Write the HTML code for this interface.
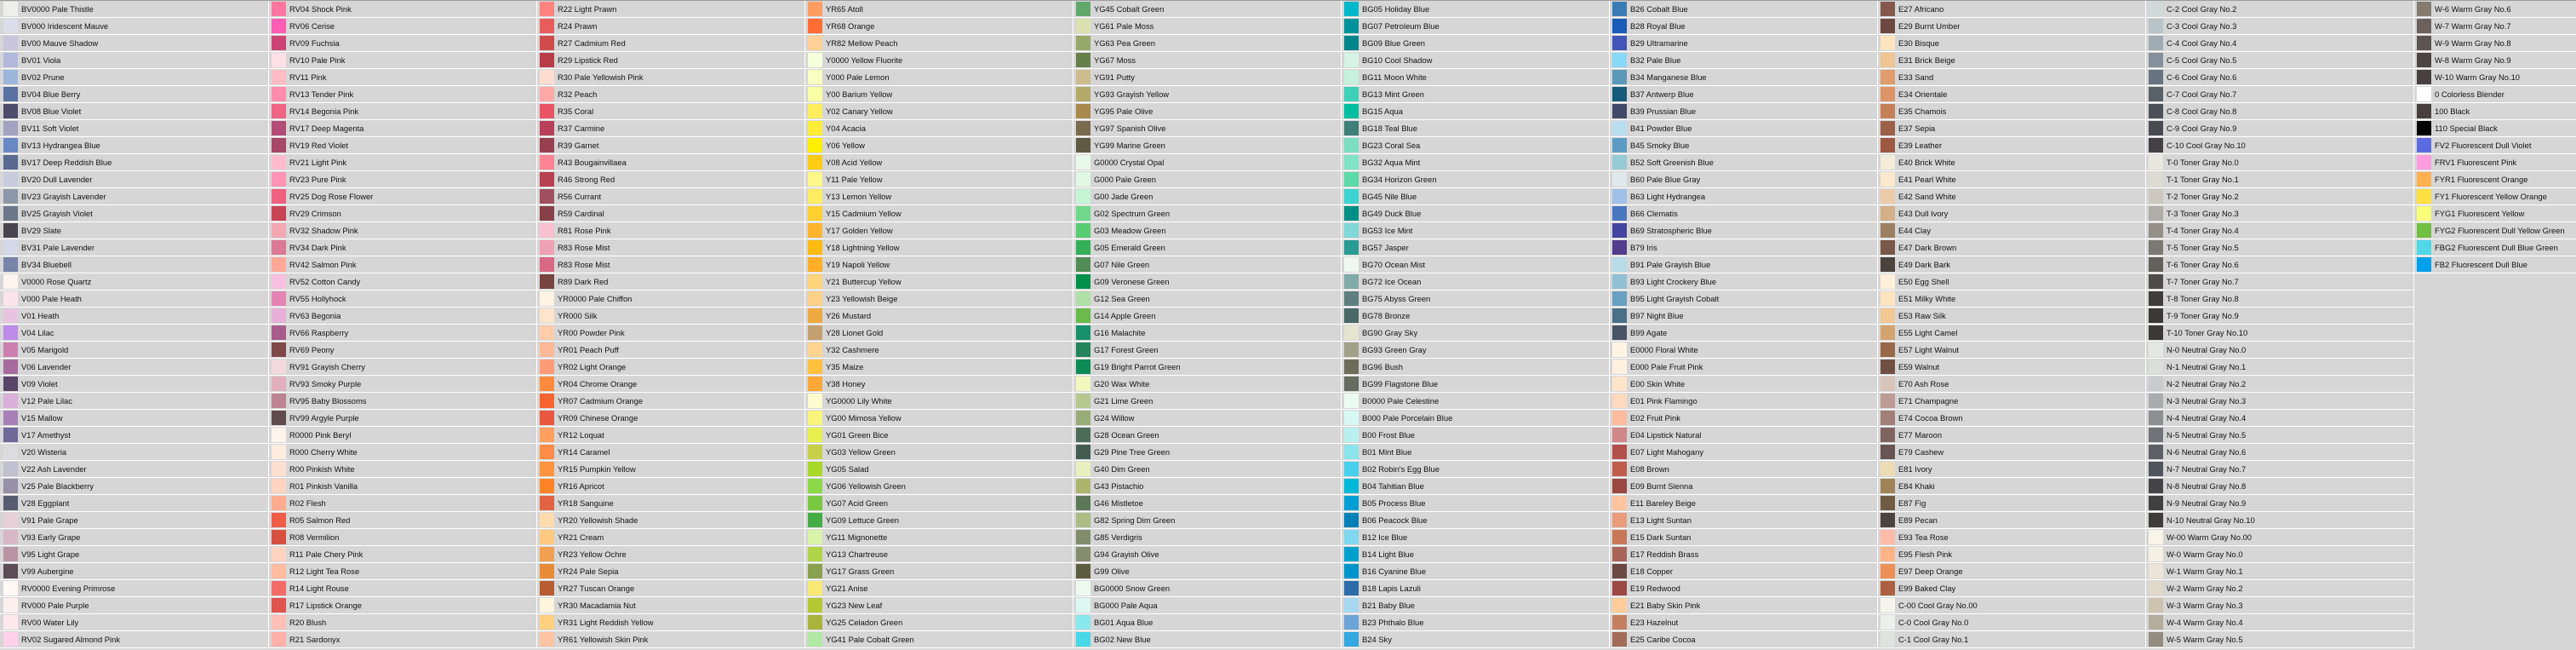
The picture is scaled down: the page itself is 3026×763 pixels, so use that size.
<!DOCTYPE html>
<html><head><meta charset="utf-8"><style>
body{margin:0;background:#d6d6d6;width:3026px;height:763px;overflow:hidden;position:relative;font-family:"Liberation Sans","DejaVu Sans",sans-serif;}
#top{position:absolute;left:0;top:0;width:3026px;height:1px;background:#9c9c9c}
.col{position:absolute;top:1px;width:316px}
.c{position:relative;height:20px;box-sizing:border-box;border-bottom:1px solid #fff;border-right:1px solid #fff;font-size:9.4px;line-height:19px;padding-left:25px;color:#111;white-space:nowrap;overflow:hidden}
.c i{position:absolute;left:4px;top:1px;width:17px;height:17px}
</style></head><body><div id="top"></div>
<div class="col" style="left:0">
<div class="c"><i style="background:#eeeeec"></i>BV0000 Pale Thistle</div>
<div class="c"><i style="background:#dcdcea"></i>BV000 Iridescent Mauve</div>
<div class="c"><i style="background:#c8c5dc"></i>BV00 Mauve Shadow</div>
<div class="c"><i style="background:#b2b8dc"></i>BV01 Viola</div>
<div class="c"><i style="background:#9eb6dc"></i>BV02 Prune</div>
<div class="c"><i style="background:#5a72a2"></i>BV04 Blue Berry</div>
<div class="c"><i style="background:#4e4c6c"></i>BV08 Blue Violet</div>
<div class="c"><i style="background:#a4a0c0"></i>BV11 Soft Violet</div>
<div class="c"><i style="background:#6a88c4"></i>BV13 Hydrangea Blue</div>
<div class="c"><i style="background:#5a6a90"></i>BV17 Deep Reddish Blue</div>
<div class="c"><i style="background:#c8ccdc"></i>BV20 Dull Lavender</div>
<div class="c"><i style="background:#8c98a8"></i>BV23 Grayish Lavender</div>
<div class="c"><i style="background:#6c7888"></i>BV25 Grayish Violet</div>
<div class="c"><i style="background:#48444f"></i>BV29 Slate</div>
<div class="c"><i style="background:#d4d8e8"></i>BV31 Pale Lavender</div>
<div class="c"><i style="background:#7884a8"></i>BV34 Bluebell</div>
<div class="c"><i style="background:#fff4f0"></i>V0000 Rose Quartz</div>
<div class="c"><i style="background:#fce4ec"></i>V000 Pale Heath</div>
<div class="c"><i style="background:#e8c4e0"></i>V01 Heath</div>
<div class="c"><i style="background:#bc8ce8"></i>V04 Lilac</div>
<div class="c"><i style="background:#cc80b0"></i>V05 Marigold</div>
<div class="c"><i style="background:#a66a9c"></i>V06 Lavender</div>
<div class="c"><i style="background:#5a4468"></i>V09 Violet</div>
<div class="c"><i style="background:#d8b0d8"></i>V12 Pale Lilac</div>
<div class="c"><i style="background:#a880b8"></i>V15 Mallow</div>
<div class="c"><i style="background:#706898"></i>V17 Amethyst</div>
<div class="c"><i style="background:#dcdce0"></i>V20 Wisteria</div>
<div class="c"><i style="background:#c0c0d0"></i>V22 Ash Lavender</div>
<div class="c"><i style="background:#9890a8"></i>V25 Pale Blackberry</div>
<div class="c"><i style="background:#585c70"></i>V28 Eggplant</div>
<div class="c"><i style="background:#e8d0d8"></i>V91 Pale Grape</div>
<div class="c"><i style="background:#d8b8c4"></i>V93 Early Grape</div>
<div class="c"><i style="background:#b894a4"></i>V95 Light Grape</div>
<div class="c"><i style="background:#5c4c54"></i>V99 Aubergine</div>
<div class="c"><i style="background:#fff8f4"></i>RV0000 Evening Primrose</div>
<div class="c"><i style="background:#fff0f0"></i>RV000 Pale Purple</div>
<div class="c"><i style="background:#ffe8ec"></i>RV00 Water Lily</div>
<div class="c"><i style="background:#ffd0ec"></i>RV02 Sugared Almond Pink</div>
</div>
<div class="col" style="left:315px">
<div class="c"><i style="background:#ff77a0"></i>RV04 Shock Pink</div>
<div class="c"><i style="background:#ff5cb4"></i>RV06 Cerise</div>
<div class="c"><i style="background:#cc4474"></i>RV09 Fuchsia</div>
<div class="c"><i style="background:#ffe0e8"></i>RV10 Pale Pink</div>
<div class="c"><i style="background:#ffbcc4"></i>RV11 Pink</div>
<div class="c"><i style="background:#ff8cac"></i>RV13 Tender Pink</div>
<div class="c"><i style="background:#f06484"></i>RV14 Begonia Pink</div>
<div class="c"><i style="background:#b44c78"></i>RV17 Deep Magenta</div>
<div class="c"><i style="background:#a84868"></i>RV19 Red Violet</div>
<div class="c"><i style="background:#ffbcd0"></i>RV21 Light Pink</div>
<div class="c"><i style="background:#ff94b4"></i>RV23 Pure Pink</div>
<div class="c"><i style="background:#f06080"></i>RV25 Dog Rose Flower</div>
<div class="c"><i style="background:#c84454"></i>RV29 Crimson</div>
<div class="c"><i style="background:#f4a8b4"></i>RV32 Shadow Pink</div>
<div class="c"><i style="background:#dc7898"></i>RV34 Dark Pink</div>
<div class="c"><i style="background:#ffa898"></i>RV42 Salmon Pink</div>
<div class="c"><i style="background:#f8c0e0"></i>RV52 Cotton Candy</div>
<div class="c"><i style="background:#e484b4"></i>RV55 Hollyhock</div>
<div class="c"><i style="background:#e8b0d8"></i>RV63 Begonia</div>
<div class="c"><i style="background:#a85c8c"></i>RV66 Raspberry</div>
<div class="c"><i style="background:#804848"></i>RV69 Peony</div>
<div class="c"><i style="background:#f4d8e0"></i>RV91 Grayish Cherry</div>
<div class="c"><i style="background:#e0b0bc"></i>RV93 Smoky Purple</div>
<div class="c"><i style="background:#bc8494"></i>RV95 Baby Blossoms</div>
<div class="c"><i style="background:#604c4c"></i>RV99 Argyle Purple</div>
<div class="c"><i style="background:#fff4ec"></i>R0000 Pink Beryl</div>
<div class="c"><i style="background:#ffece0"></i>R000 Cherry White</div>
<div class="c"><i style="background:#ffe0d0"></i>R00 Pinkish White</div>
<div class="c"><i style="background:#ffd4c0"></i>R01 Pinkish Vanilla</div>
<div class="c"><i style="background:#ffac90"></i>R02 Flesh</div>
<div class="c"><i style="background:#f05c48"></i>R05 Salmon Red</div>
<div class="c"><i style="background:#d85040"></i>R08 Vermilion</div>
<div class="c"><i style="background:#ffd4c0"></i>R11 Pale Chery Pink</div>
<div class="c"><i style="background:#ffbca0"></i>R12 Light Tea Rose</div>
<div class="c"><i style="background:#f46c68"></i>R14 Light Rouse</div>
<div class="c"><i style="background:#e05450"></i>R17 Lipstick Orange</div>
<div class="c"><i style="background:#ffc0b8"></i>R20 Blush</div>
<div class="c"><i style="background:#ffb0a8"></i>R21 Sardonyx</div>
</div>
<div class="col" style="left:630px">
<div class="c"><i style="background:#ff8480"></i>R22 Light Prawn</div>
<div class="c"><i style="background:#e85c5c"></i>R24 Prawn</div>
<div class="c"><i style="background:#d04c4c"></i>R27 Cadmium Red</div>
<div class="c"><i style="background:#b83c48"></i>R29 Lipstick Red</div>
<div class="c"><i style="background:#ffdcd0"></i>R30 Pale Yellowish Pink</div>
<div class="c"><i style="background:#ffa8a8"></i>R32 Peach</div>
<div class="c"><i style="background:#e85464"></i>R35 Coral</div>
<div class="c"><i style="background:#b84058"></i>R37 Carmine</div>
<div class="c"><i style="background:#984050"></i>R39 Garnet</div>
<div class="c"><i style="background:#ff8494"></i>R43 Bougainvillaea</div>
<div class="c"><i style="background:#b84050"></i>R46 Strong Red</div>
<div class="c"><i style="background:#a05060"></i>R56 Currant</div>
<div class="c"><i style="background:#884048"></i>R59 Cardinal</div>
<div class="c"><i style="background:#f8c0d0"></i>R81 Rose Pink</div>
<div class="c"><i style="background:#f0a0b4"></i>R83 Rose Mist</div>
<div class="c"><i style="background:#d86884"></i>R83 Rose Mist</div>
<div class="c"><i style="background:#784440"></i>R89 Dark Red</div>
<div class="c"><i style="background:#fff4e4"></i>YR0000 Pale Chiffon</div>
<div class="c"><i style="background:#ffe4cc"></i>YR000 Silk</div>
<div class="c"><i style="background:#ffccac"></i>YR00 Powder Pink</div>
<div class="c"><i style="background:#ffb898"></i>YR01 Peach Puff</div>
<div class="c"><i style="background:#ff9c78"></i>YR02 Light Orange</div>
<div class="c"><i style="background:#ff8c3c"></i>YR04 Chrome Orange</div>
<div class="c"><i style="background:#f86430"></i>YR07 Cadmium Orange</div>
<div class="c"><i style="background:#e85840"></i>YR09 Chinese Orange</div>
<div class="c"><i style="background:#ffa060"></i>YR12 Loquat</div>
<div class="c"><i style="background:#ff8c48"></i>YR14 Caramel</div>
<div class="c"><i style="background:#ff9440"></i>YR15 Pumpkin Yellow</div>
<div class="c"><i style="background:#ff8428"></i>YR16 Apricot</div>
<div class="c"><i style="background:#e06444"></i>YR18 Sanguine</div>
<div class="c"><i style="background:#ffdcb0"></i>YR20 Yellowish Shade</div>
<div class="c"><i style="background:#ffc880"></i>YR21 Cream</div>
<div class="c"><i style="background:#f0a050"></i>YR23 Yellow Ochre</div>
<div class="c"><i style="background:#e88c38"></i>YR24 Pale Sepia</div>
<div class="c"><i style="background:#b85c34"></i>YR27 Tuscan Orange</div>
<div class="c"><i style="background:#fff4dc"></i>YR30 Macadamia Nut</div>
<div class="c"><i style="background:#ffd080"></i>YR31 Light Reddish Yellow</div>
<div class="c"><i style="background:#ffc4a4"></i>YR61 Yellowish Skin Pink</div>
</div>
<div class="col" style="left:945px">
<div class="c"><i style="background:#ff9c60"></i>YR65 Atoll</div>
<div class="c"><i style="background:#ff6c34"></i>YR68 Orange</div>
<div class="c"><i style="background:#ffd098"></i>YR82 Mellow Peach</div>
<div class="c"><i style="background:#f8ffdc"></i>Y0000 Yellow Fluorite</div>
<div class="c"><i style="background:#f8ffc0"></i>Y000 Pale Lemon</div>
<div class="c"><i style="background:#f8ffa4"></i>Y00 Barium Yellow</div>
<div class="c"><i style="background:#ffec5c"></i>Y02 Canary Yellow</div>
<div class="c"><i style="background:#ffec38"></i>Y04 Acacia</div>
<div class="c"><i style="background:#fff000"></i>Y06 Yellow</div>
<div class="c"><i style="background:#ffcc14"></i>Y08 Acid Yellow</div>
<div class="c"><i style="background:#fff888"></i>Y11 Pale Yellow</div>
<div class="c"><i style="background:#ffec60"></i>Y13 Lemon Yellow</div>
<div class="c"><i style="background:#ffd030"></i>Y15 Cadmium Yellow</div>
<div class="c"><i style="background:#ffb430"></i>Y17 Golden Yellow</div>
<div class="c"><i style="background:#ffbc10"></i>Y18 Lightning Yellow</div>
<div class="c"><i style="background:#ffb028"></i>Y19 Napoli Yellow</div>
<div class="c"><i style="background:#ffd47c"></i>Y21 Buttercup Yellow</div>
<div class="c"><i style="background:#ffd088"></i>Y23 Yellowish Beige</div>
<div class="c"><i style="background:#eeaa40"></i>Y26 Mustard</div>
<div class="c"><i style="background:#c4a070"></i>Y28 Lionet Gold</div>
<div class="c"><i style="background:#ffd490"></i>Y32 Cashmere</div>
<div class="c"><i style="background:#ffc040"></i>Y35 Maize</div>
<div class="c"><i style="background:#ffa838"></i>Y38 Honey</div>
<div class="c"><i style="background:#fcfcd0"></i>YG0000 Lily White</div>
<div class="c"><i style="background:#f8f47c"></i>YG00 Mimosa Yellow</div>
<div class="c"><i style="background:#e8f050"></i>YG01 Green Bice</div>
<div class="c"><i style="background:#c8d048"></i>YG03 Yellow Green</div>
<div class="c"><i style="background:#a8d828"></i>YG05 Salad</div>
<div class="c"><i style="background:#8cd848"></i>YG06 Yellowish Green</div>
<div class="c"><i style="background:#78c840"></i>YG07 Acid Green</div>
<div class="c"><i style="background:#44ac44"></i>YG09 Lettuce Green</div>
<div class="c"><i style="background:#d8f4a8"></i>YG11 Mignonette</div>
<div class="c"><i style="background:#b0d448"></i>YG13 Chartreuse</div>
<div class="c"><i style="background:#88a050"></i>YG17 Grass Green</div>
<div class="c"><i style="background:#f8e874"></i>YG21 Anise</div>
<div class="c"><i style="background:#b4c834"></i>YG23 New Leaf</div>
<div class="c"><i style="background:#a8b43c"></i>YG25 Celadon Green</div>
<div class="c"><i style="background:#b0e8a4"></i>YG41 Pale Cobalt Green</div>
</div>
<div class="col" style="left:1260px">
<div class="c"><i style="background:#62a86b"></i>YG45 Cobalt Green</div>
<div class="c"><i style="background:#dbe0b0"></i>YG61 Pale Moss</div>
<div class="c"><i style="background:#97a86b"></i>YG63 Pea Green</div>
<div class="c"><i style="background:#677f4b"></i>YG67 Moss</div>
<div class="c"><i style="background:#cdbd8e"></i>YG91 Putty</div>
<div class="c"><i style="background:#b3aa6a"></i>YG93 Grayish Yellow</div>
<div class="c"><i style="background:#a88a4c"></i>YG95 Pale Olive</div>
<div class="c"><i style="background:#7b6b4e"></i>YG97 Spanish Olive</div>
<div class="c"><i style="background:#5e5a43"></i>YG99 Marine Green</div>
<div class="c"><i style="background:#e8f8ea"></i>G0000 Crystal Opal</div>
<div class="c"><i style="background:#e0f8e4"></i>G000 Pale Green</div>
<div class="c"><i style="background:#c5f5d5"></i>G00 Jade Green</div>
<div class="c"><i style="background:#6fd88a"></i>G02 Spectrum Green</div>
<div class="c"><i style="background:#58cc70"></i>G03 Meadow Green</div>
<div class="c"><i style="background:#34b058"></i>G05 Emerald Green</div>
<div class="c"><i style="background:#528c55"></i>G07 Nile Green</div>
<div class="c"><i style="background:#01914a"></i>G09 Veronese Green</div>
<div class="c"><i style="background:#b0dfa8"></i>G12 Sea Green</div>
<div class="c"><i style="background:#6aba4c"></i>G14 Apple Green</div>
<div class="c"><i style="background:#18906c"></i>G16 Malachite</div>
<div class="c"><i style="background:#24845c"></i>G17 Forest Green</div>
<div class="c"><i style="background:#0c8c54"></i>G19 Bright Parrot Green</div>
<div class="c"><i style="background:#f0f8c0"></i>G20 Wax White</div>
<div class="c"><i style="background:#b4c890"></i>G21 Lime Green</div>
<div class="c"><i style="background:#98ac78"></i>G24 Willow</div>
<div class="c"><i style="background:#4c6c58"></i>G28 Ocean Green</div>
<div class="c"><i style="background:#445c50"></i>G29 Pine Tree Green</div>
<div class="c"><i style="background:#e8f0c0"></i>G40 Dim Green</div>
<div class="c"><i style="background:#acb46c"></i>G43 Pistachio</div>
<div class="c"><i style="background:#5c7858"></i>G46 Mistletoe</div>
<div class="c"><i style="background:#acbc84"></i>G82 Spring Dim Green</div>
<div class="c"><i style="background:#808c6c"></i>G85 Verdigris</div>
<div class="c"><i style="background:#848c6c"></i>G94 Grayish Olive</div>
<div class="c"><i style="background:#5c5c40"></i>G99 Olive</div>
<div class="c"><i style="background:#eefaf0"></i>BG0000 Snow Green</div>
<div class="c"><i style="background:#dcf8f0"></i>BG000 Pale Aqua</div>
<div class="c"><i style="background:#88e8ec"></i>BG01 Aqua Blue</div>
<div class="c"><i style="background:#48d8e8"></i>BG02 New Blue</div>
</div>
<div class="col" style="left:1575px">
<div class="c"><i style="background:#00b8cc"></i>BG05 Holiday Blue</div>
<div class="c"><i style="background:#00929c"></i>BG07 Petroleum Blue</div>
<div class="c"><i style="background:#00868a"></i>BG09 Blue Green</div>
<div class="c"><i style="background:#d6f3e6"></i>BG10 Cool Shadow</div>
<div class="c"><i style="background:#c6f1dc"></i>BG11 Moon White</div>
<div class="c"><i style="background:#3fd0b8"></i>BG13 Mint Green</div>
<div class="c"><i style="background:#00bfa0"></i>BG15 Aqua</div>
<div class="c"><i style="background:#3e8078"></i>BG18 Teal Blue</div>
<div class="c"><i style="background:#7cdfc0"></i>BG23 Coral Sea</div>
<div class="c"><i style="background:#80e4c4"></i>BG32 Aqua Mint</div>
<div class="c"><i style="background:#5cd9a8"></i>BG34 Horizon Green</div>
<div class="c"><i style="background:#3bd4d0"></i>BG45 Nile Blue</div>
<div class="c"><i style="background:#008f84"></i>BG49 Duck Blue</div>
<div class="c"><i style="background:#80d8d8"></i>BG53 Ice Mint</div>
<div class="c"><i style="background:#2a9a94"></i>BG57 Jasper</div>
<div class="c"><i style="background:#eef8f0"></i>BG70 Ocean Mist</div>
<div class="c"><i style="background:#80aaa8"></i>BG72 Ice Ocean</div>
<div class="c"><i style="background:#5f7f7e"></i>BG75 Abyss Green</div>
<div class="c"><i style="background:#4a6866"></i>BG78 Bronze</div>
<div class="c"><i style="background:#e4e4d0"></i>BG90 Gray Sky</div>
<div class="c"><i style="background:#a0a088"></i>BG93 Green Gray</div>
<div class="c"><i style="background:#6c6c5c"></i>BG96 Bush</div>
<div class="c"><i style="background:#686c60"></i>BG99 Flagstone Blue</div>
<div class="c"><i style="background:#ecfaf4"></i>B0000 Pale Celestine</div>
<div class="c"><i style="background:#d8f8f4"></i>B000 Pale Porcelain Blue</div>
<div class="c"><i style="background:#b8f0f0"></i>B00 Frost Blue</div>
<div class="c"><i style="background:#8ce4ec"></i>B01 Mint Blue</div>
<div class="c"><i style="background:#48d0ec"></i>B02 Robin's Egg Blue</div>
<div class="c"><i style="background:#00b8d8"></i>B04 Tahitian Blue</div>
<div class="c"><i style="background:#00a0d4"></i>B05 Process Blue</div>
<div class="c"><i style="background:#0080b4"></i>B06 Peacock Blue</div>
<div class="c"><i style="background:#80d8f0"></i>B12 Ice Blue</div>
<div class="c"><i style="background:#00a0cc"></i>B14 Light Blue</div>
<div class="c"><i style="background:#0094cc"></i>B16 Cyanine Blue</div>
<div class="c"><i style="background:#2c6ca8"></i>B18 Lapis Lazuli</div>
<div class="c"><i style="background:#a8d8f0"></i>B21 Baby Blue</div>
<div class="c"><i style="background:#6ca4d8"></i>B23 Phthalo Blue</div>
<div class="c"><i style="background:#34a8e0"></i>B24 Sky</div>
</div>
<div class="col" style="left:1890px">
<div class="c"><i style="background:#3a7bb5"></i>B26 Cobalt Blue</div>
<div class="c"><i style="background:#1a5bb8"></i>B28 Royal Blue</div>
<div class="c"><i style="background:#4255b8"></i>B29 Ultramarine</div>
<div class="c"><i style="background:#88d8f8"></i>B32 Pale Blue</div>
<div class="c"><i style="background:#5c98b8"></i>B34 Manganese Blue</div>
<div class="c"><i style="background:#175b7a"></i>B37 Antwerp Blue</div>
<div class="c"><i style="background:#404a68"></i>B39 Prussian Blue</div>
<div class="c"><i style="background:#b8def0"></i>B41 Powder Blue</div>
<div class="c"><i style="background:#5c9cc4"></i>B45 Smoky Blue</div>
<div class="c"><i style="background:#96cad4"></i>B52 Soft Greenish Blue</div>
<div class="c"><i style="background:#e0e8ec"></i>B60 Pale Blue Gray</div>
<div class="c"><i style="background:#a0c0e8"></i>B63 Light Hydrangea</div>
<div class="c"><i style="background:#4a78c0"></i>B66 Clematis</div>
<div class="c"><i style="background:#4444a0"></i>B69 Stratospheric Blue</div>
<div class="c"><i style="background:#523e8c"></i>B79 Iris</div>
<div class="c"><i style="background:#b8dce8"></i>B91 Pale Grayish Blue</div>
<div class="c"><i style="background:#90c0d4"></i>B93 Light Crockery Blue</div>
<div class="c"><i style="background:#68a0c0"></i>B95 Light Grayish Cobalt</div>
<div class="c"><i style="background:#4a7088"></i>B97 Night Blue</div>
<div class="c"><i style="background:#485464"></i>B99 Agate</div>
<div class="c"><i style="background:#fff4e4"></i>E0000 Floral White</div>
<div class="c"><i style="background:#fff0e0"></i>E000 Pale Fruit Pink</div>
<div class="c"><i style="background:#ffe4cc"></i>E00 Skin White</div>
<div class="c"><i style="background:#ffd8c0"></i>E01 Pink Flamingo</div>
<div class="c"><i style="background:#ffbc9c"></i>E02 Fruit Pink</div>
<div class="c"><i style="background:#d08888"></i>E04 Lipstick Natural</div>
<div class="c"><i style="background:#b4504c"></i>E07 Light Mahogany</div>
<div class="c"><i style="background:#c05c4c"></i>E08 Brown</div>
<div class="c"><i style="background:#984840"></i>E09 Burnt Sienna</div>
<div class="c"><i style="background:#ffc4a0"></i>E11 Bareley Beige</div>
<div class="c"><i style="background:#e89c7c"></i>E13 Light Suntan</div>
<div class="c"><i style="background:#c87858"></i>E15 Dark Suntan</div>
<div class="c"><i style="background:#a86458"></i>E17 Reddish Brass</div>
<div class="c"><i style="background:#6c4844"></i>E18 Copper</div>
<div class="c"><i style="background:#9c4844"></i>E19 Redwood</div>
<div class="c"><i style="background:#ffcc9c"></i>E21 Baby Skin Pink</div>
<div class="c"><i style="background:#c48060"></i>E23 Hazelnut</div>
<div class="c"><i style="background:#a46c58"></i>E25 Caribe Cocoa</div>
</div>
<div class="col" style="left:2205px">
<div class="c"><i style="background:#84584c"></i>E27 Africano</div>
<div class="c"><i style="background:#6c4840"></i>E29 Burnt Umber</div>
<div class="c"><i style="background:#ffe4c0"></i>E30 Bisque</div>
<div class="c"><i style="background:#f0c494"></i>E31 Brick Beige</div>
<div class="c"><i style="background:#e09c6c"></i>E33 Sand</div>
<div class="c"><i style="background:#dc9468"></i>E34 Orientale</div>
<div class="c"><i style="background:#c48058"></i>E35 Chamois</div>
<div class="c"><i style="background:#9c6048"></i>E37 Sepia</div>
<div class="c"><i style="background:#9c5840"></i>E39 Leather</div>
<div class="c"><i style="background:#f4ecd8"></i>E40 Brick White</div>
<div class="c"><i style="background:#fce8cc"></i>E41 Pearl White</div>
<div class="c"><i style="background:#eccca8"></i>E42 Sand White</div>
<div class="c"><i style="background:#d4b088"></i>E43 Dull Ivory</div>
<div class="c"><i style="background:#9c8064"></i>E44 Clay</div>
<div class="c"><i style="background:#785848"></i>E47 Dark Brown</div>
<div class="c"><i style="background:#4c443c"></i>E49 Dark Bark</div>
<div class="c"><i style="background:#fff0dc"></i>E50 Egg Shell</div>
<div class="c"><i style="background:#ffe4c0"></i>E51 Milky White</div>
<div class="c"><i style="background:#f4c894"></i>E53 Raw Silk</div>
<div class="c"><i style="background:#d4a470"></i>E55 Light Camel</div>
<div class="c"><i style="background:#986848"></i>E57 Light Walnut</div>
<div class="c"><i style="background:#705044"></i>E59 Walnut</div>
<div class="c"><i style="background:#d8c4b8"></i>E70 Ash Rose</div>
<div class="c"><i style="background:#bc9c94"></i>E71 Champagne</div>
<div class="c"><i style="background:#a08078"></i>E74 Cocoa Brown</div>
<div class="c"><i style="background:#806460"></i>E77 Maroon</div>
<div class="c"><i style="background:#685450"></i>E79 Cashew</div>
<div class="c"><i style="background:#ecdcb4"></i>E81 Ivory</div>
<div class="c"><i style="background:#a08458"></i>E84 Khaki</div>
<div class="c"><i style="background:#705c44"></i>E87 Fig</div>
<div class="c"><i style="background:#4c443c"></i>E89 Pecan</div>
<div class="c"><i style="background:#ffbca8"></i>E93 Tea Rose</div>
<div class="c"><i style="background:#ffb488"></i>E95 Flesh Pink</div>
<div class="c"><i style="background:#ec9058"></i>E97 Deep Orange</div>
<div class="c"><i style="background:#ac6040"></i>E99 Baked Clay</div>
<div class="c"><i style="background:#f4f4ec"></i>C-00 Cool Gray No.00</div>
<div class="c"><i style="background:#ecf0ec"></i>C-0 Cool Gray No.0</div>
<div class="c"><i style="background:#e0e4e0"></i>C-1 Cool Gray No.1</div>
</div>
<div class="col" style="left:2520px">
<div class="c"><i style="background:#d0d8d8"></i>C-2 Cool Gray No.2</div>
<div class="c"><i style="background:#b8c4c8"></i>C-3 Cool Gray No.3</div>
<div class="c"><i style="background:#a0acb4"></i>C-4 Cool Gray No.4</div>
<div class="c"><i style="background:#84909c"></i>C-5 Cool Gray No.5</div>
<div class="c"><i style="background:#687480"></i>C-6 Cool Gray No.6</div>
<div class="c"><i style="background:#586068"></i>C-7 Cool Gray No.7</div>
<div class="c"><i style="background:#4c5058"></i>C-8 Cool Gray No.8</div>
<div class="c"><i style="background:#484c50"></i>C-9 Cool Gray No.9</div>
<div class="c"><i style="background:#444044"></i>C-10 Cool Gray No.10</div>
<div class="c"><i style="background:#e8e8e0"></i>T-0 Toner Gray No.0</div>
<div class="c"><i style="background:#dcdcd4"></i>T-1 Toner Gray No.1</div>
<div class="c"><i style="background:#ccc8c0"></i>T-2 Toner Gray No.2</div>
<div class="c"><i style="background:#b0aca8"></i>T-3 Toner Gray No.3</div>
<div class="c"><i style="background:#949088"></i>T-4 Toner Gray No.4</div>
<div class="c"><i style="background:#7c7874"></i>T-5 Toner Gray No.5</div>
<div class="c"><i style="background:#64605c"></i>T-6 Toner Gray No.6</div>
<div class="c"><i style="background:#504c4c"></i>T-7 Toner Gray No.7</div>
<div class="c"><i style="background:#403c3c"></i>T-8 Toner Gray No.8</div>
<div class="c"><i style="background:#3c3838"></i>T-9 Toner Gray No.9</div>
<div class="c"><i style="background:#3c3838"></i>T-10 Toner Gray No.10</div>
<div class="c"><i style="background:#e4e8e4"></i>N-0 Neutral Gray No.0</div>
<div class="c"><i style="background:#dcdedc"></i>N-1 Neutral Gray No.1</div>
<div class="c"><i style="background:#c8cccc"></i>N-2 Neutral Gray No.2</div>
<div class="c"><i style="background:#a8acac"></i>N-3 Neutral Gray No.3</div>
<div class="c"><i style="background:#8c9090"></i>N-4 Neutral Gray No.4</div>
<div class="c"><i style="background:#707478"></i>N-5 Neutral Gray No.5</div>
<div class="c"><i style="background:#5c6064"></i>N-6 Neutral Gray No.6</div>
<div class="c"><i style="background:#50545c"></i>N-7 Neutral Gray No.7</div>
<div class="c"><i style="background:#444448"></i>N-8 Neutral Gray No.8</div>
<div class="c"><i style="background:#404040"></i>N-9 Neutral Gray No.9</div>
<div class="c"><i style="background:#403c3c"></i>N-10 Neutral Gray No.10</div>
<div class="c"><i style="background:#f8f4e8"></i>W-00 Warm Gray No.00</div>
<div class="c"><i style="background:#f4f0e4"></i>W-0 Warm Gray No.0</div>
<div class="c"><i style="background:#ece4d8"></i>W-1 Warm Gray No.1</div>
<div class="c"><i style="background:#e0d8c8"></i>W-2 Warm Gray No.2</div>
<div class="c"><i style="background:#ccc4b0"></i>W-3 Warm Gray No.3</div>
<div class="c"><i style="background:#b4ac9c"></i>W-4 Warm Gray No.4</div>
<div class="c"><i style="background:#948c80"></i>W-5 Warm Gray No.5</div>
</div>
<div class="col" style="left:2835px">
<div class="c"><i style="background:#847c70"></i>W-6 Warm Gray No.6</div>
<div class="c"><i style="background:#6c605c"></i>W-7 Warm Gray No.7</div>
<div class="c"><i style="background:#5c5450"></i>W-9 Warm Gray No.8</div>
<div class="c"><i style="background:#4c4440"></i>W-8 Warm Gray No.9</div>
<div class="c"><i style="background:#484040"></i>W-10 Warm Gray No.10</div>
<div class="c"><i style="background:#ffffff"></i>0 Colorless Blender</div>
<div class="c"><i style="background:#484040"></i>100 Black</div>
<div class="c"><i style="background:#000000"></i>110 Special Black</div>
<div class="c"><i style="background:#5c6ce0"></i>FV2 Fluorescent Dull Violet</div>
<div class="c"><i style="background:#ff9ce0"></i>FRV1 Fluorescent Pink</div>
<div class="c"><i style="background:#ffb050"></i>FYR1 Fluorescent Orange</div>
<div class="c"><i style="background:#ffe040"></i>FY1 Fluorescent Yellow Orange</div>
<div class="c"><i style="background:#f8ff78"></i>FYG1 Fluorescent Yellow</div>
<div class="c"><i style="background:#70c044"></i>FYG2 Fluorescent Dull Yellow Green</div>
<div class="c"><i style="background:#50d8e8"></i>FBG2 Fluorescent Dull Blue Green</div>
<div class="c"><i style="background:#00a0ec"></i>FB2 Fluorescent Dull Blue</div>
</div>
</body></html>
